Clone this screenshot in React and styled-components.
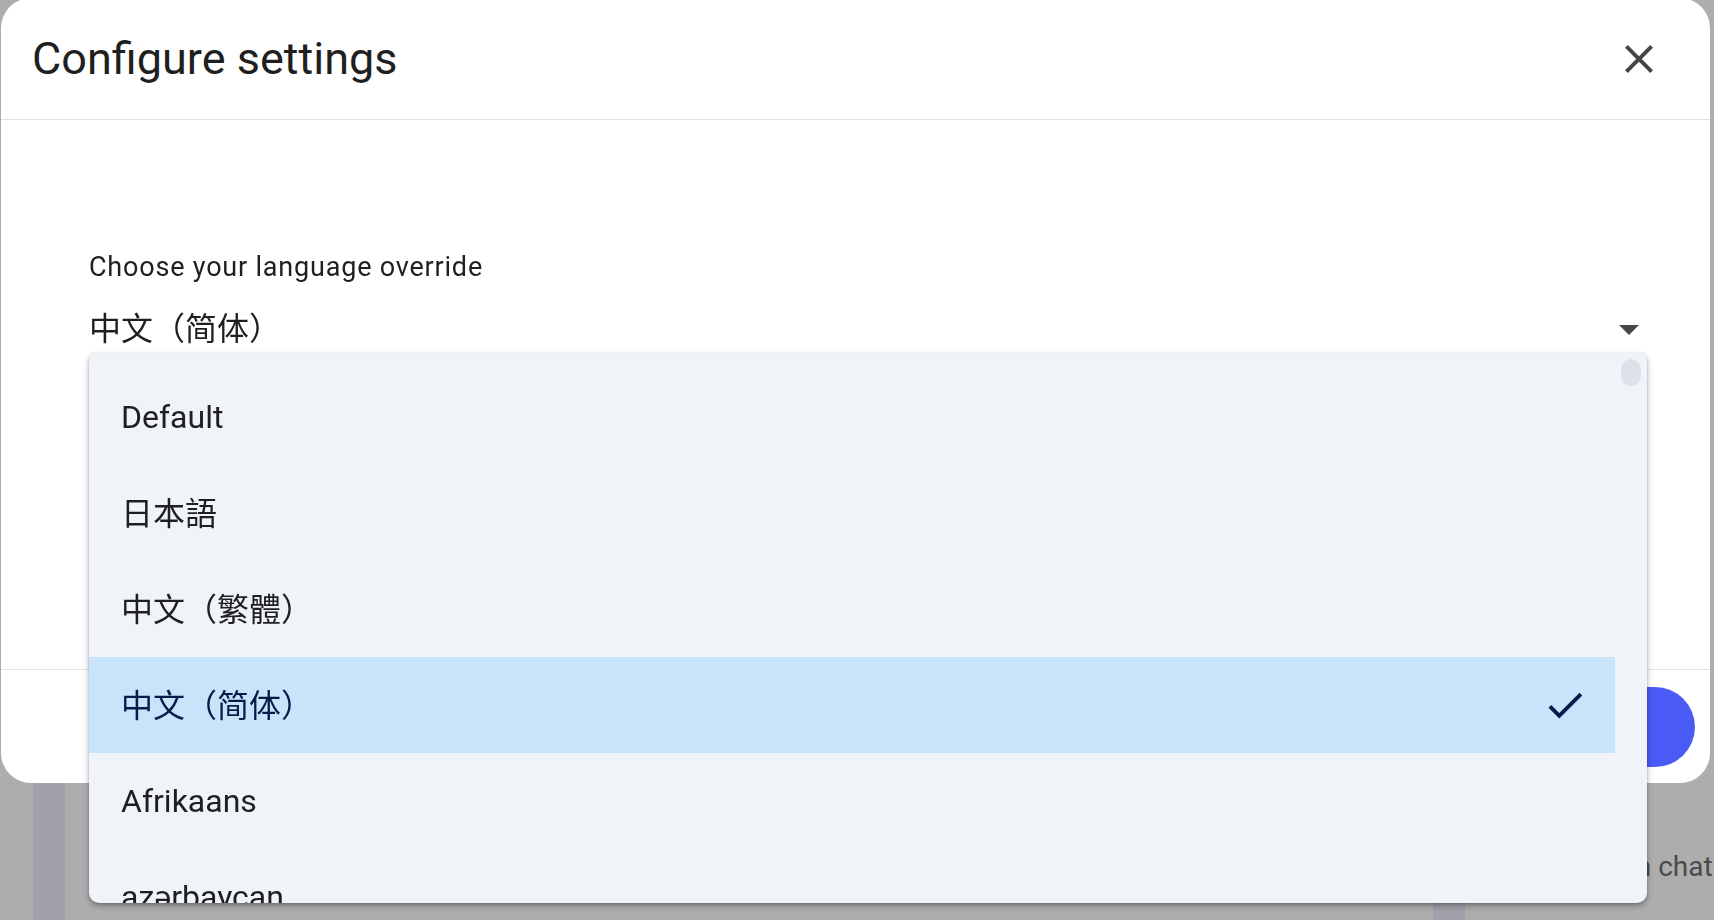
import React from "react";
import styled, { createGlobalStyle } from "styled-components";

const Global = createGlobalStyle`
  html, body { margin: 0; padding: 0; overflow: hidden; }
  body {
    font-family: Roboto, "Noto Sans CJK SC", sans-serif;
    background: #adadad;
  }
  * { box-sizing: border-box; }
`;

const Page = styled.div`
  display: flex;
  width: 1714px;
  height: 920px;
  padding-left: 33px;
  background: #adadad;
`;

const Rail = styled.div`
  width: 32px;
  flex: none;
  background: #a1a1a9;
`;

const Main = styled.div`
  flex: none;
  width: 1368px;
`;

const SideArea = styled.div`
  flex: 1;
  display: flex;
  flex-direction: column;
  justify-content: flex-end;
  padding: 0 0 36px 164px;
  overflow: hidden;
`;

const ChatHint = styled.span`
  font-size: 28px;
  line-height: 34px;
  color: #4a4a4a;
  white-space: nowrap;
`;

const Dialog = styled.div`
  position: fixed;
  left: 1px;
  top: -2px;
  width: 1709px;
  height: 785px;
  background: #ffffff;
  border-radius: 30px;
  display: flex;
  flex-direction: column;
`;

const Header = styled.div`
  height: 122px;
  flex: none;
  display: flex;
  align-items: center;
  justify-content: space-between;
  padding: 0 47px 0 31px;
  border-bottom: 1px solid #dde2ea;
`;

const Title = styled.h1`
  margin: 0;
  font-size: 45px;
  font-weight: 400;
  color: #1f1f1f;
`;

const IconButton = styled.button`
  width: 48px;
  height: 48px;
  padding: 0;
  border: none;
  background: transparent;
  color: #444746;
  display: flex;
  align-items: center;
  justify-content: center;
`;

const Body = styled.div`
  flex: 1;
  padding: 131px 57px 0 88px;
`;

const Label = styled.div`
  font-size: 27px;
  line-height: 32px;
  letter-spacing: 0.8px;
  color: #1f1f1f;
  margin-bottom: 22px;
`;

const Field = styled.div`
  position: relative;
`;

const FieldRow = styled.div`
  height: 48px;
  display: flex;
  align-items: center;
  justify-content: space-between;
  font-size: 32px;
  line-height: 48px;
  color: #1f1f1f;
  svg { color: #444746; }
`;

const Footer = styled.div`
  height: 114px;
  flex: none;
  border-top: 1px solid #dde2ea;
  display: flex;
  align-items: center;
  justify-content: flex-end;
  padding: 0 15px 0 0;
`;

const PrimaryButton = styled.button`
  width: 210px;
  height: 80px;
  border: none;
  border-radius: 40px;
  background: #4a5bf6;
  color: #ffffff;
  font-family: inherit;
  font-size: 28px;
`;

const Menu = styled.div`
  position: absolute;
  top: 100%;
  left: 0;
  width: 1558px;
  height: 550px;
  background: #f0f4f9;
  border-radius: 6px 6px 10px 10px;
  box-shadow: 0 3px 6px rgba(0, 0, 0, 0.28), 0 1px 3px rgba(0, 0, 0, 0.18);
  display: flex;
  overflow: hidden;
`;

const List = styled.ul`
  flex: 1;
  list-style: none;
  margin: 0;
  padding: 16px 0 0;
`;

const Item = styled.li`
  height: 96px;
  display: flex;
  align-items: center;
  justify-content: space-between;
  padding: 0 27px 0 32px;
  font-size: 32px;
  color: ${(p) => (p.$selected ? "#041e49" : "#1f1f1f")};
  background: ${(p) => (p.$selected ? "#c8e4fa" : "transparent")};
  white-space: nowrap;
`;

const ItemText = styled.span`
  position: relative;
  top: ${(p) => (p.$cjk ? "-2px" : "0")};
`;

const Track = styled.div`
  width: 32px;
  flex: none;
  padding: 6px;
`;

const Thumb = styled.div`
  height: 27px;
  border-radius: 10px;
  background: #dde2ea;
`;

const CloseIcon = () => (
  <svg width="48" height="48" viewBox="0 0 24 24" fill="currentColor">
    <path d="M19 6.41L17.59 5 12 10.59 6.41 5 5 6.41 10.59 12 5 17.59 6.41 19 12 13.41 17.59 19 19 17.59 13.41 12z" />
  </svg>
);

const DropIcon = () => (
  <svg width="48" height="48" viewBox="0 0 24 24" fill="currentColor">
    <path d="M7 10l5 5 5-5z" />
  </svg>
);

const CheckIcon = () => (
  <svg width="46" height="46" viewBox="0 0 24 24" fill="currentColor">
    <path d="M9 16.17L4.83 12l-1.42 1.41L9 19 21 7l-1.41-1.41z" />
  </svg>
);

const languages = [
  { label: "Default" },
  { label: "日本語", cjk: true },
  { label: "中文（繁體）", cjk: true },
  { label: "中文（简体）", cjk: true },
  { label: "Afrikaans" },
  { label: "azərbaycan" },
];

export default function App() {
  const selected = "中文（简体）";
  return (
    <>
      <Global />
      <Page>
        <Rail />
        <Main />
        <Rail />
        <SideArea>
          <ChatHint>in chat</ChatHint>
        </SideArea>
      </Page>
      <Dialog>
        <Header>
          <Title>Configure settings</Title>
          <IconButton aria-label="Close">
            <CloseIcon />
          </IconButton>
        </Header>
        <Body>
          <Label>Choose your language override</Label>
          <Field>
            <FieldRow>
              <span>{selected}</span>
              <DropIcon />
            </FieldRow>
            <Menu>
              <List>
                {languages.map((l) => (
                  <Item key={l.label} $selected={l.label === selected}>
                    <ItemText $cjk={l.cjk}>{l.label}</ItemText>
                    {l.label === selected && <CheckIcon />}
                  </Item>
                ))}
              </List>
              <Track>
                <Thumb />
              </Track>
            </Menu>
          </Field>
        </Body>
        <Footer>
          <PrimaryButton>Save</PrimaryButton>
        </Footer>
      </Dialog>
    </>
  );
}
